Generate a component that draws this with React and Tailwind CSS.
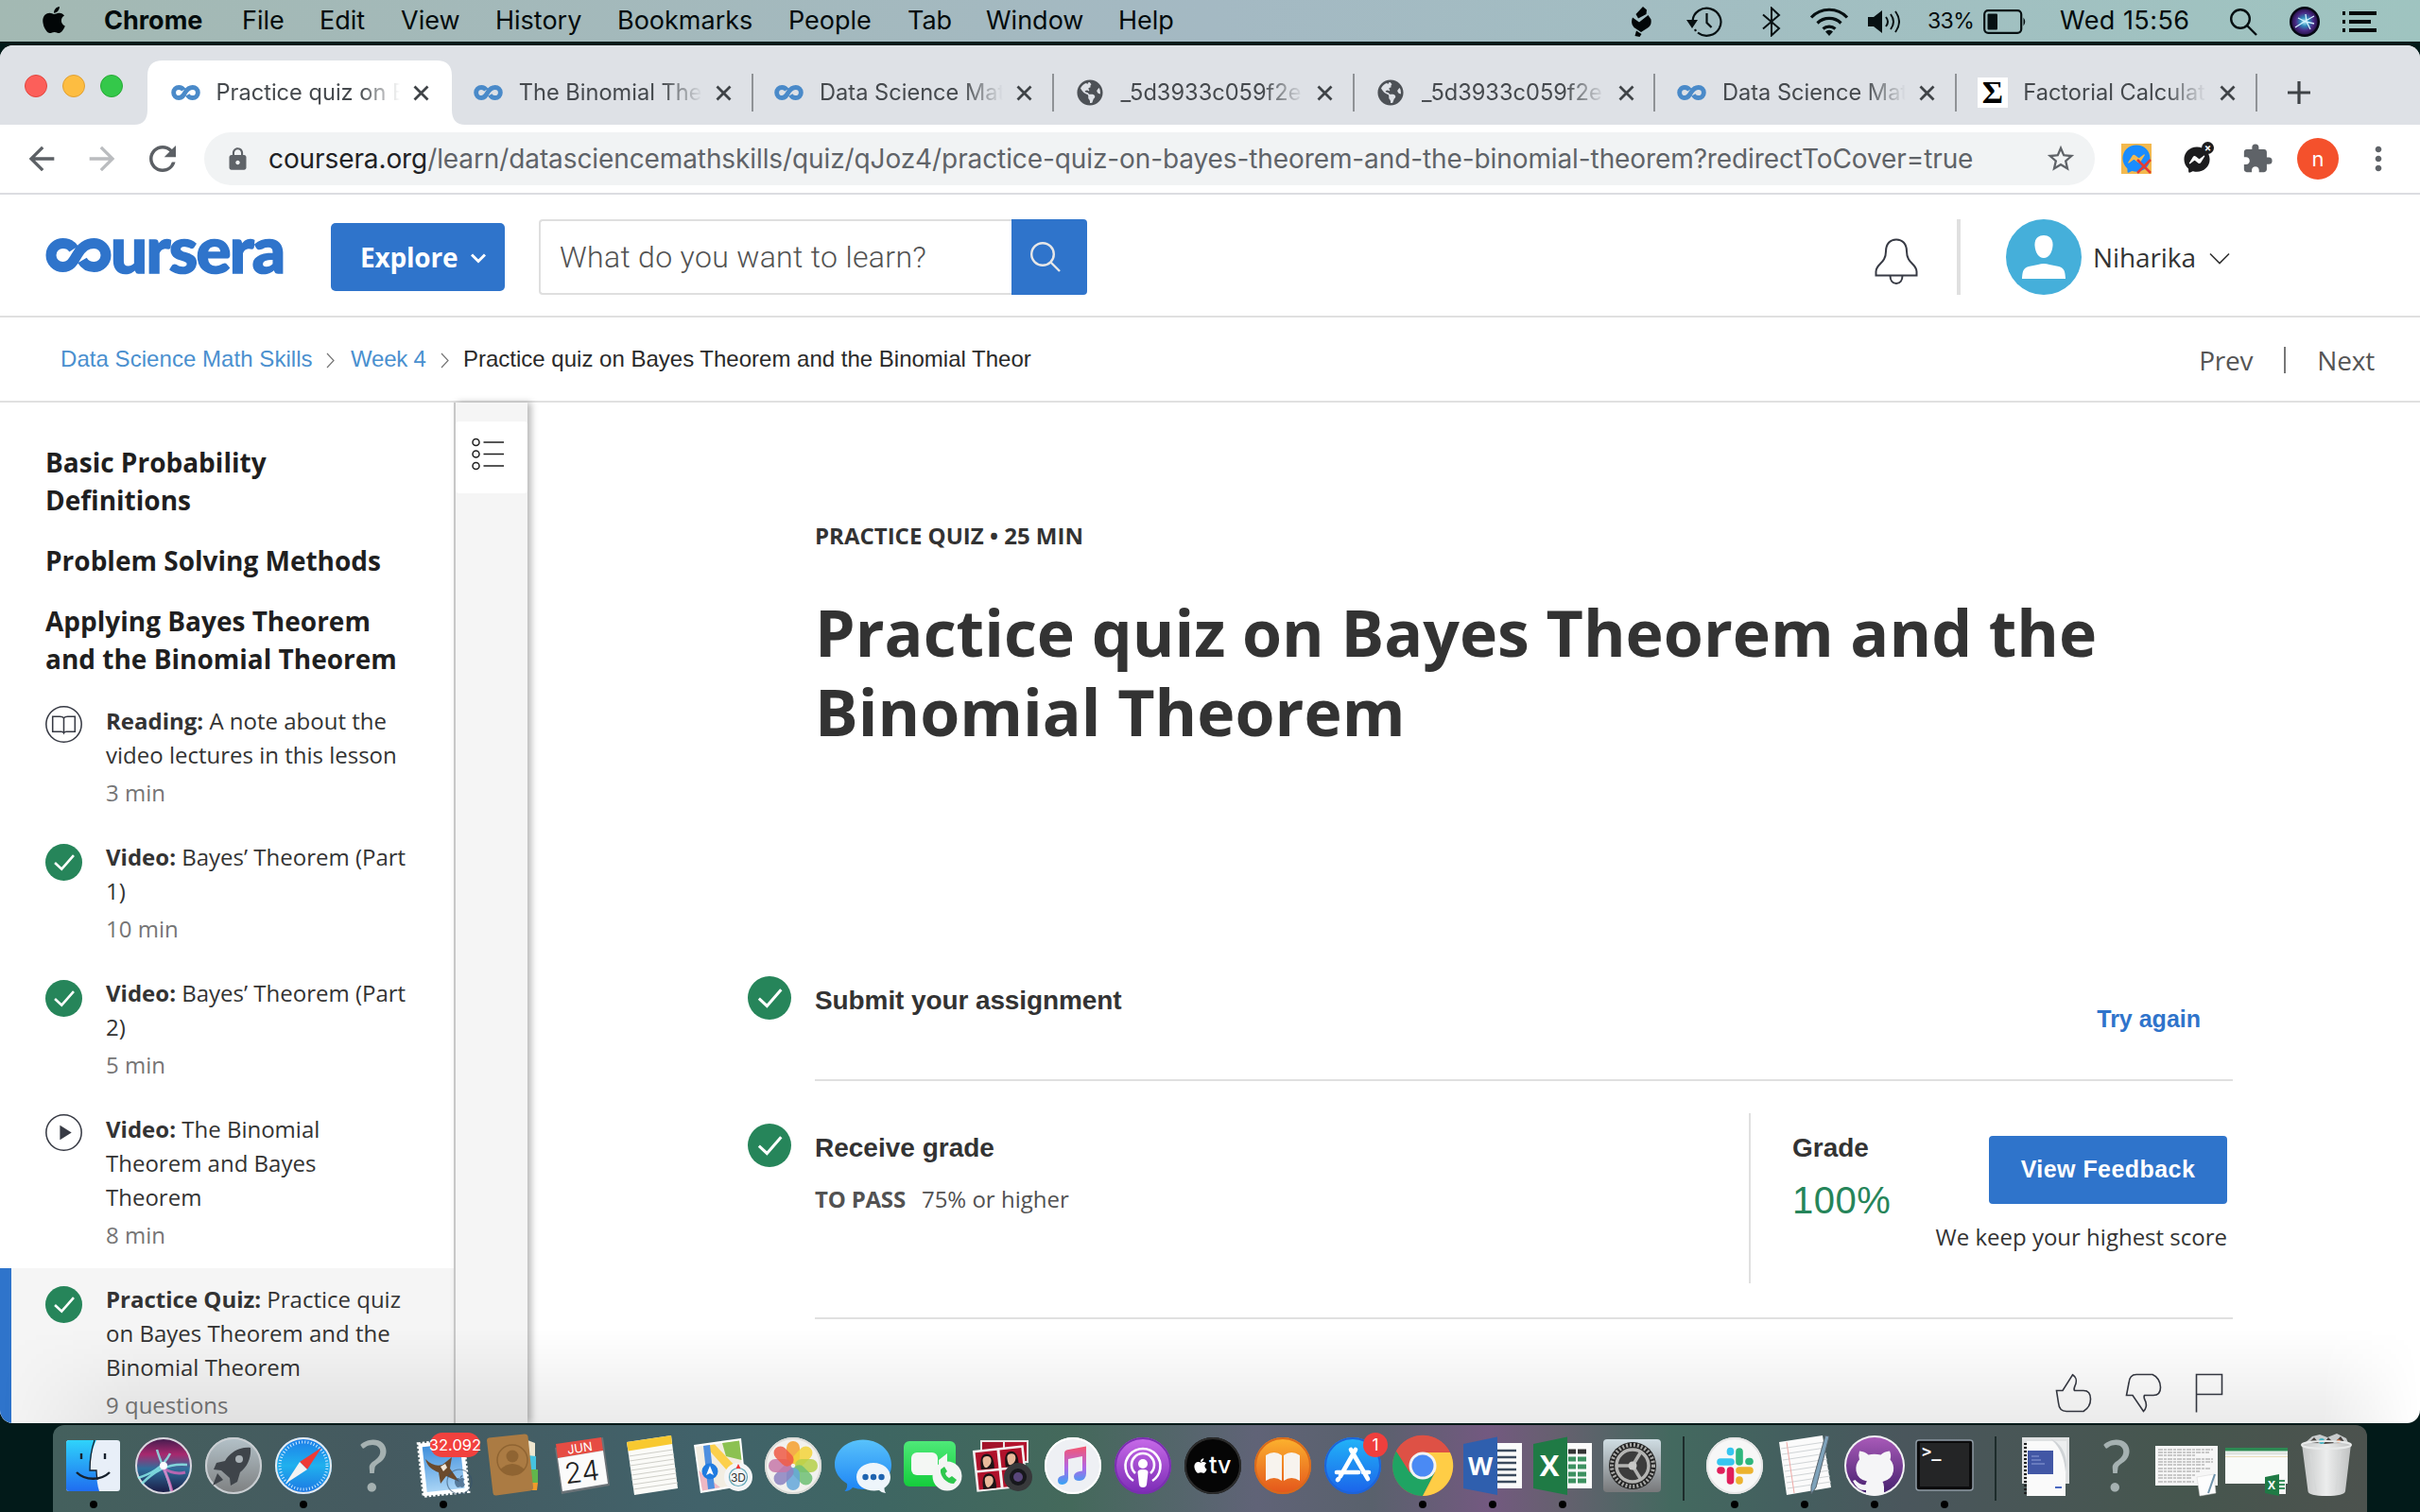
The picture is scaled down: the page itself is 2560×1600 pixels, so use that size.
import React from "react";
import { FaApple, FaFacebookMessenger, FaGlobeAmericas } from "react-icons/fa";
import {
  MdArrowBack,
  MdArrowForward,
  MdRefresh,
  MdLock,
  MdStarBorder,
  MdExtension,
  MdMoreVert,
} from "react-icons/md";

/* ---------- shared marks ---------- */

function Infinity({ className }) {
  return (
    <svg viewBox="0 0 70 36" className={className} fill="none" stroke="currentColor" strokeWidth="11">
      <path d="M30 11.500C27.500 7.500 23.500 5.500 18.500 5.500A12.500 12.500 0 0 0 18.500 30.500C27 30.500 29.500 24.500 34 17C38.500 9.500 43 5.500 51.500 5.500A12.500 12.500 0 0 1 51.500 30.500C46 30.500 42 28.500 39 23.500" />
    </svg>
  );
}

function Check({ className }) {
  return (
    <svg viewBox="0 0 38 38" className={className}>
      <circle cx="19" cy="19" r="19" fill="#26855a" />
      <path d="M9.800 19.500L16.800 26L29.200 11.800" fill="none" stroke="#fff" strokeWidth="2.500" />
    </svg>
  );
}

/* ---------- macOS menu bar ---------- */

const MENUS = [
  ["File", "w-[82px]"],
  ["Edit", "w-[86px]"],
  ["View", "w-[100px]"],
  ["History", "w-[129px]"],
  ["Bookmarks", "w-[181px]"],
  ["People", "w-[126px]"],
  ["Tab", "w-[83px]"],
  ["Window", "w-[140px]"],
  ["Help", "w-[80px]"],
];

function MenuBar() {
  return (
    <div className="flex h-[44px] shrink-0 items-center bg-linear-to-r from-[#a3b9b3] via-[#a4b9c3] to-[#9fc4c0] pl-[41px] pr-[46px] pt-[1px] text-[27px] text-[#030b0c]">
      <FaApple className="mr-[37px] size-[32px] shrink-0 -translate-y-[2px] text-[#020607]" />
      <span className="w-[146px] shrink-0 font-bold">Chrome</span>
      {MENUS.map(([m, w]) => (
        <span key={m} className={"shrink-0 whitespace-nowrap " + w}>
          {m}
        </span>
      ))}
      <div className="ml-auto flex items-center">
        <svg viewBox="0 0 22 32" className="mr-[37px] h-[32px] w-[22px]" fill="#020607">
          <path d="M13 0L17 3.500L16.500 8L8 12.500L5.500 8z" />
          <path d="M2 11.500L9 16.500L18.500 9L21.500 13.500Q22.500 20 18 22.500L11 27L3.500 22Q-.5 18 2 11.500z" />
          <path d="M6 25.500L11.500 29L9.500 32L4.500 31z" />
        </svg>
        <svg viewBox="0 0 38 32" className="mr-[42px] h-[32px] w-[38px]" fill="none" stroke="#071012" strokeWidth="2.200">
          <path d="M6.500 15A15 14.500 0 1 1 12 27.500M10 26l-1-2" />
          <path d="M0 14h12l-6 9z" fill="#071012" stroke="none" />
          <path d="M21.500 7v10l5 5" />
        </svg>
        <svg viewBox="0 0 20 32" className="mr-[30px] h-[32px] w-[20px]" fill="none" stroke="#071012" strokeWidth="2">
          <path d="M1 8.500L18 23L10 30.500V1.500L18 9L1 23.500" />
        </svg>
        <svg viewBox="0 0 42 30" className="mr-[20px] h-[30px] w-[42px]" fill="none" stroke="#071012" strokeWidth="3.200">
          <path d="M2 10.500A26 26 0 0 1 40 10.500M8.500 16.500A18 18 0 0 1 33.500 16.500M14.500 22.500A10 10 0 0 1 27.500 22.500" />
          <path d="M17 25.500a5.500 5.500 0 0 1 8 0L21 30z" fill="#071012" stroke="none" />
        </svg>
        <svg viewBox="0 0 34 26" className="mr-[29px] h-[26px] w-[34px]" fill="none" stroke="#071012" strokeWidth="2">
          <path d="M0 8h6l9-7v24l-9-7H0z" fill="#071012" stroke="none" />
          <path d="M19 8q4 5 0 10M24 5q6 8 0 16M29 2q8 11 0 22" />
        </svg>
        <span className="mr-[10px] w-[49px] text-[23px] tracking-[-0.6px]">33%</span>
        <svg viewBox="0 0 46 26" className="mr-[35px] h-[26px] w-[46px]">
          <rect x="1.200" y="1.200" width="39" height="23.600" rx="4" fill="none" stroke="#071012" strokeWidth="2.200" />
          <rect x="4.500" y="4.500" width="10.500" height="17" rx="1" fill="#071012" />
          <path d="M42.500 8.500q3.500 4.500 0 9z" fill="#071012" />
        </svg>
        <span className="mr-[41px] w-[138px] whitespace-nowrap tracking-[0.45px]">Wed 15:56</span>
        <svg viewBox="0 0 30 30" className="mr-[34px] size-[30px]" fill="none" stroke="#071012" strokeWidth="2.400">
          <circle cx="12" cy="12" r="9.800" />
          <path d="M19 19l10 10" />
        </svg>
        <svg viewBox="0 0 32 32" className="mr-[24px] size-[32px]">
          <defs>
            <radialGradient id="siri-mini">
              <stop offset="0" stopColor="#b8f3f8" />
              <stop offset="0.35" stopColor="#2f86b8" />
              <stop offset="0.7" stopColor="#4a2a86" />
              <stop offset="1" stopColor="#2a1450" />
            </radialGradient>
          </defs>
          <circle cx="16" cy="16" r="16" fill="#060713" />
          <circle cx="16" cy="16" r="13.500" fill="url(#siri-mini)" />
          <path d="M6 22L17 15l9-5M17 8l1 8 4 8M9 12l8 4 9 2" stroke="#d5f3ff" strokeWidth="1.300" fill="none" />
        </svg>
        <svg viewBox="0 0 36 22" className="h-[22px] w-[36px]" fill="#020607">
          <path d="M0 0h3v4H0zM7 0h29v4H7zM0 9h3v4H0zM7 9h23v4H7zM0 18h3v4H0zM7 18h29v4H7z" />
        </svg>
      </div>
    </div>
  );
}

/* ---------- browser chrome ---------- */

const TABS = [
  ["coursera", "Practice quiz on Bayes Theorem", "active"],
  ["coursera", "The Binomial Theorem", "plain"],
  ["coursera", "Data Science Math Skills", "line"],
  ["globe", "_5d3933c059f2e", "line"],
  ["globe", "_5d3933c059f2e", "line"],
  ["coursera", "Data Science Math Skills", "line"],
  ["sigma", "Factorial Calculator", "line"],
];

function Favicon({ kind }) {
  if (kind === "coursera") return <Infinity className="h-[16px] w-[31px] text-[#4a8ac9]" />;
  if (kind === "globe") return <FaGlobeAmericas className="size-[28px] text-[#4d5156]" />;
  return (
    <span className="flex size-[32px] items-center justify-center bg-white font-['Liberation_Serif'] text-[34px] font-bold leading-none text-black">
      Σ
    </span>
  );
}

function Tab({ kind, title, state }) {
  const active = state === "active";
  return (
    <div className={"relative flex h-[68px] w-[318.300px] shrink-0 items-center " + (active ? "pl-[20px]" : "pl-[22px]")}>
      {active && (
        <svg viewBox="0 0 350 68" className="absolute -left-[18px] top-0 h-[68px] w-[350px]">
          <path d="M0 68Q14 68 14 52V16Q14 0 30 0H320Q336 0 336 16V52Q336 68 350 68z" fill="#fff" />
        </svg>
      )}
      <span className="relative flex w-[32px] justify-center">
        <Favicon kind={kind} />
      </span>
      <span className="relative ml-[16.500px] w-[194px] overflow-hidden whitespace-nowrap text-[23.600px] text-[#45494d] [mask-image:linear-gradient(to_right,black_78%,transparent_100%)]">
        {title}
      </span>
      <svg viewBox="0 0 17 17" className="relative ml-[14px] size-[17px]" stroke="#3f4347" strokeWidth="2.800">
        <path d="M1.500 1.500l14 14M15.500 1.500l-14 14" />
      </svg>
      {!active && <span className="ml-auto h-[40px] w-[2px] bg-[#8f9296]" />}
    </div>
  );
}

function TabStrip() {
  return (
    <div className="flex h-[84px] shrink-0 items-start rounded-t-[12px] bg-[#dee1e6] pt-[16px]">
      <div className="flex h-[54px] w-[160px] shrink-0 items-center gap-[16px] pl-[26px]">
        <span className="size-[24px] rounded-full border border-[#e2463f] bg-[#fc5f5a]" />
        <span className="size-[24px] rounded-full border border-[#e0a033] bg-[#fdbd41]" />
        <span className="size-[24px] rounded-full border border-[#27aa35] bg-[#34c84a]" />
      </div>
      {TABS.map(([k, t, s], i) => (
        <Tab key={i} kind={k} title={t} state={s} />
      ))}
      <div className="flex h-[68px] w-[88px] items-center justify-center">
        <svg viewBox="0 0 24 24" className="size-[24px]" stroke="#3f4347" strokeWidth="3.200">
          <path d="M12 0v24M0 12h24" />
        </svg>
      </div>
    </div>
  );
}

function Toolbar() {
  return (
    <div className="flex h-[74px] shrink-0 items-center border-b-2 border-[#dcdde1] bg-white pl-[24px]">
      <MdArrowBack className="size-[40px] text-[#5c6065]" />
      <MdArrowForward className="ml-[24px] size-[40px] text-[#babcbf]" />
      <MdRefresh className="ml-[23px] size-[42px] text-[#5c6065]" />
      <div className="ml-[23px] flex h-[56px] w-[2000px] items-center rounded-full bg-[#f1f3f4] pl-[22px] pr-[19px]">
        <MdLock className="size-[27px] text-[#5f6368]" />
        <span className="ml-[19px] whitespace-nowrap text-[28px] tracking-[-0.100px] text-[#5f6368]">
          <span className="text-[#202124]">coursera.org</span>
          /learn/datasciencemathskills/quiz/qJoz4/practice-quiz-on-bayes-theorem-and-the-binomial-theorem?redirectToCover=true
        </span>
        <MdStarBorder className="ml-auto size-[34px] text-[#5f6368]" />
      </div>
      <div className="relative ml-[28px] flex size-[32px] items-center justify-center bg-[#f3b94e]">
        <FaFacebookMessenger className="size-[30px] text-[#1a8cff]" />
        <svg viewBox="0 0 16 16" className="absolute bottom-0 right-0 size-[16px]" stroke="#e33b32" strokeWidth="2.500">
          <path d="M1 1l14 14M15 1L1 15" />
        </svg>
      </div>
      <div className="relative ml-[34px] flex size-[30px] items-end">
        <FaFacebookMessenger className="size-[28px] text-[#1c1c1e]" />
        <span className="absolute -right-[2px] -top-[3px] flex size-[13px] items-center justify-center rounded-full bg-[#1c1c1e] text-[11px] font-bold leading-none text-white">
          ×
        </span>
      </div>
      <MdExtension className="ml-[31px] size-[34px] text-[#5f6368]" />
      <span className="ml-[25px] flex size-[44px] items-center justify-center rounded-full bg-[#f4512c] text-[22px] text-white">n</span>
      <MdMoreVert className="ml-[22px] size-[40px] text-[#5f6368]" />
    </div>
  );
}

/* ---------- Coursera page ---------- */

function SiteHeader() {
  return (
    <div className="flex h-[130px] shrink-0 items-center border-b-2 border-[#e0e0e0] pl-[48px] pt-[4px] font-['Open_Sans']">
      <div className="flex h-[80px] w-[302px] items-center text-[#2f74cb]">
        <Infinity className="h-[36px] w-[70px] shrink-0 -translate-y-[2px]" />
        <span className="-ml-[1px] -translate-y-[9px] font-['Lato'] text-[69px] font-black leading-[80px] tracking-[-1.700px] [-webkit-text-stroke:1.6px_#2f74cb]">
          ursera
        </span>
      </div>
      <div className="flex h-[72px] w-[184px] items-center rounded-[5px] bg-[#2f74cb] pl-[31px] text-white">
        <span className="text-[28px] font-bold tracking-[-0.200px]">Explore</span>
        <svg viewBox="0 0 16 11" className="ml-[14px] mt-[3px] h-[11px] w-[16px]" fill="none" stroke="#fff" strokeWidth="3">
          <path d="M1 1.500l7 7 7-7" />
        </svg>
      </div>
      <div className="ml-[36px] flex h-[80px] w-[580px]">
        <div className="flex w-[500px] items-center rounded-l-[4px] border-2 border-r-0 border-[#dfdfdf] pl-[20px]">
          <span className="font-['Roboto'] text-[32px] font-light tracking-[0.320px] text-[#525252]">What do you want to learn?</span>
        </div>
        <div className="flex w-[80px] items-center rounded-r-[4px] bg-[#2f74cb] pl-[20px]">
          <svg viewBox="0 0 32 32" className="size-[32px]" fill="none" stroke="#e7e7e7" strokeWidth="2.400">
            <circle cx="13" cy="13" r="11.800" />
            <path d="M21.500 21.500L31 31" />
          </svg>
        </div>
      </div>
      <svg viewBox="0 0 46 50" className="ml-auto mt-[9px] h-[50px] w-[46px]" fill="none" stroke="#373a44" strokeWidth="2">
        <path d="M1.500 39.500v-4C1.500 27 12 27 12 14C12 6 16.500 1.500 23 1.500S34 6 34 14C34 27 44.500 27 44.500 35.500V39.500z" />
        <path d="M16.500 39.500C16.500 44.500 19 48 23 48S29.500 44.500 29.500 39.500" />
      </svg>
      <span className="ml-[41px] h-[80px] w-[4px] bg-[#e0e0e0]" />
      <svg viewBox="0 0 80 80" className="ml-[48px] size-[80px]">
        <circle cx="40" cy="40" r="40" fill="#45afda" />
        <path d="M40 17c7 0 10 5 9.500 11c-.5 7-4 13-9.500 13s-9-6-9.500-13C30 22 33 17 40 17z" fill="#fff" />
        <path d="M17 63C17.500 55 18 52 24 50L34 48Q40 46 46 48L56 50C62 52 62.500 55 63 63z" fill="#fff" />
      </svg>
      <span className="ml-[12px] w-[109px] text-[28px] tracking-[-0.100px] text-[#333]">Niharika</span>
      <svg viewBox="0 0 22 13" className="ml-[14px] mr-[201px] mt-[3px] h-[13px] w-[22px]" fill="none" stroke="#333" strokeWidth="1.600">
        <path d="M1 1.500l10 10 10-10" />
      </svg>
    </div>
  );
}

function Crumb() {
  return (
    <svg viewBox="0 0 9 17" className="mt-[3px] h-[17px] w-[9px]" fill="none" stroke="#757575" strokeWidth="1.200">
      <path d="M1 1l7 7.500-7 7.500" />
    </svg>
  );
}

function Breadcrumbs() {
  return (
    <div className="flex h-[90px] shrink-0 items-center border-b-2 border-[#e0e0e0] pl-[64px] pr-[48px]">
      <div className="flex w-[1027px] items-center overflow-hidden whitespace-nowrap font-['Liberation_Sans'] text-[24px] text-[#4a90cf]">
        <span className="w-[281px] shrink-0 tracking-[0.050px]">Data Science Math Skills</span>
        <Crumb />
        <span className="ml-[17px] w-[95px] shrink-0 tracking-[-0.200px]">Week 4</span>
        <Crumb />
        <span className="ml-[15px] text-[#2a2a2a]">Practice quiz on Bayes Theorem and the Binomial Theor</span>
      </div>
      <div className="ml-auto mt-[2px] flex items-center font-['Open_Sans'] text-[28px] tracking-[-0.200px] text-[#555]">
        <span>Prev</span>
        <span className="mx-[33px] h-[28px] w-[2px] bg-[#777]" />
        <span>Next</span>
      </div>
    </div>
  );
}

const ITEMS = [
  { icon: "book", kind: "Reading:", title: "A note about the video lectures in this lesson", meta: "3 min" },
  { icon: "check", kind: "Video:", title: "Bayes’ Theorem (Part 1)", meta: "10 min" },
  { icon: "check", kind: "Video:", title: "Bayes’ Theorem (Part 2)", meta: "5 min" },
  { icon: "play", kind: "Video:", title: "The Binomial Theorem and Bayes Theorem", meta: "8 min" },
  { icon: "check", kind: "Practice Quiz:", title: "Practice quiz on Bayes Theorem and the Binomial Theorem", meta: "9 questions", active: true },
];

function ItemIcon({ icon }) {
  if (icon === "check") return <Check className="mt-[4px] size-[39px] shrink-0" />;
  return (
    <svg viewBox="0 0 38 38" className="mt-[2px] size-[39px] shrink-0" fill="none" stroke="#373a44" strokeWidth="1.500">
      <circle cx="19" cy="19" r="18.200" />
      {icon === "book" ? (
        <path d="M19 12.500C18 11.300 17 11 15 11H7.500V26.500H16.500C18 26.500 18.500 27 19 28C19.500 27 20 26.500 21.500 26.500H30.500V11H23C21 11 20 11.300 19 12.500zV28" />
      ) : (
        <path d="M15 11.500L27 19L15 26.500z" fill="#373a44" stroke="none" />
      )}
    </svg>
  );
}

function Sidebar() {
  return (
    <div className="flex w-[480px] shrink-0 flex-col overflow-hidden font-['Open_Sans']">
      <div className="flex flex-col gap-[24px] pb-[13px] pl-[48px] pr-[40px] pt-[43px] text-[28px] font-bold leading-[40px] text-[#1f1f1f]">
        <div>Basic Probability<br />Definitions</div>
        <div>Problem Solving Methods</div>
        <div>Applying Bayes Theorem<br />and the Binomial Theorem</div>
      </div>
      {ITEMS.map((it, i) => (
        <div
          key={i}
          className={
            it.active
              ? "flex shrink-0 border-l-[12px] border-[#2f74cb] bg-[#f5f5f5] pb-[17px] pl-[36px] pt-[15px]"
              : "flex shrink-0 pb-[17px] pl-[48px] pt-[15px]"
          }
        >
          <ItemIcon icon={it.icon} />
          <div className="ml-[25px] w-[326px] text-[24px] leading-[36px] text-[#333]">
            <div>
              <b>{it.kind}</b> {it.title}
            </div>
            <div className="mt-[4px] text-[#757575]">{it.meta}</div>
          </div>
        </div>
      ))}
    </div>
  );
}

function Rail() {
  return (
    <div className="w-[78px] shrink-0 border-l-2 border-[#c7c7c7] bg-[#f5f5f5] pt-[20px] shadow-[4px_0_7px_rgba(0,0,0,0.28)]">
      <div className="flex h-[76px] items-start rounded-[4px] bg-white pl-[17px] pt-[17px]">
        <svg viewBox="0 0 34 36" className="h-[36px] w-[34px]" fill="none" stroke="#1f1f1f" strokeWidth="1.500">
          <circle cx="4.500" cy="5" r="3.500" />
          <circle cx="4.500" cy="17.500" r="3.500" />
          <circle cx="4.500" cy="30" r="3.500" />
          <path d="M12.500 5h21.500M12.500 17.500h21.500M12.500 30h21.500" />
        </svg>
      </div>
    </div>
  );
}

function Quiz() {
  return (
    <div className="flex flex-1 flex-col pl-[233px] text-[#333]">
      <div className="pl-[71px] font-['Open_Sans']">
        <div className="mt-[122px] text-[24px] font-bold leading-[37px]">PRACTICE QUIZ • 25 MIN</div>
        <h1 className="mt-[42px] text-[68px] font-bold leading-[84px]">
          Practice quiz on Bayes Theorem and the
          <br />
          Binomial Theorem
        </h1>
      </div>

      <div className="mt-[205px] flex h-[144px]">
        <Check className="mr-[25px] mt-[33px] size-[46px]" />
        <div className="flex w-[1500px] justify-between border-b-2 border-[#e0e0e0] font-['Liberation_Sans'] font-bold">
          <span className="mt-[39px] text-[28px] leading-[40px] tracking-[-0.100px]">Submit your assignment</span>
          <span className="mr-[34px] mt-[58px] text-[25px] leading-[40px] text-[#2f74cb]">Try again</span>
        </div>
      </div>

      <div className="flex h-[252px] shrink-0">
        <Check className="mr-[25px] mt-[45px] size-[46px]" />
        <div className="flex w-[1500px] border-b-2 border-[#e0e0e0]">
          <div className="w-[988px] pt-[51px]">
            <div className="font-['Liberation_Sans'] text-[28px] font-bold leading-[40px]">Receive grade</div>
            <div className="mt-[14px] font-['Open_Sans'] text-[24px] leading-[40px] text-[#525252]">
              <b className="mr-[17px] tracking-[-0.200px]">TO PASS</b>75% or higher
            </div>
          </div>
          <div className="mt-[34px] flex h-[180px] w-[506px] border-l-2 border-[#e0e0e0] pl-[44px]">
            <div className="pt-[17px] font-['Liberation_Sans']">
              <div className="text-[28px] font-bold leading-[40px]">Grade</div>
              <div className="mt-[11px] text-[40px] leading-[48px] tracking-[0.500px] text-[#26855a]">100%</div>
            </div>
            <div className="ml-auto flex flex-col items-end pt-[24px]">
              <div className="flex h-[72px] w-[252px] items-center justify-center rounded-[4px] bg-[#2f74cb] font-['Liberation_Sans'] text-[25px] font-bold tracking-[0.450px] text-white">
                View Feedback
              </div>
              <div className="mt-[15px] font-['Open_Sans'] text-[24px] leading-[40px]">We keep your highest score</div>
            </div>
          </div>
        </div>
      </div>

      <div className="mt-[57px] flex h-[42px] w-[1571px] justify-end gap-[35px] pr-[10px]">
        <svg viewBox="0 0 39 42" className="h-[42px] w-[39px]" fill="none" stroke="#373a44" strokeWidth="1.600">
          <path d="M1.500 18.500H8L18.500 1.800C22 4 23 8 22 11C21 14 19 16.500 20.500 18.500H30C35.500 18.500 37.500 22 37.500 27.500C37.500 33 34 38 30 40.500H12C6.500 40.500 4 37 3.500 31.500z" />
        </svg>
        <svg viewBox="0 0 39 42" className="h-[42px] w-[39px]" fill="none" stroke="#373a44" strokeWidth="1.600">
          <path d="M1.500 23.500L4 10.500C4.500 4.500 7.500 1.500 12 1.500H29C34 3.500 37.500 9 37.500 15C37.500 21 35 23.500 30 23.500H20.500C19 26 21 28 22 31C23 35 22 38 19.500 40.500L8 23.500z" />
        </svg>
        <svg viewBox="0 0 30 42" className="h-[42px] w-[30px]" fill="none" stroke="#373a44" strokeWidth="1.600">
          <path d="M1.500 41.500V1.500H28.500V22.500H1.500" />
        </svg>
      </div>
    </div>
  );
}

/* ---------- dock ---------- */

function Disc({ fill, ring = "#ffffff55" }) {
  return (
    <>
      <circle cx="37" cy="43" r="30" fill={fill} />
      <circle cx="37" cy="43" r="29" fill="none" stroke={ring} strokeWidth="2" />
    </>
  );
}

const PETALS = ["#f6a02d", "#f3d33a", "#b5d049", "#6fbf73", "#64a7d9", "#8c82c0", "#c778a8", "#ee5a45"];

const ART = {
  finder: (
    <>
      <rect x="8" y="16" width="57" height="54" rx="3" fill="#e8eff8" />
      <path d="M11 16H40C35 26 33.500 36 33.500 48H40C40 56 41 64 43 70H11a3 3 0 0 1-3-3V19a3 3 0 0 1 3-3z" fill="url(#g-finder)" />
      <path d="M24 30v6M49 30v6M19 50c9 9 26 9 35 0" stroke="#16202c" strokeWidth="2.400" fill="none" />
      <path d="M38 16C34.500 26 33 36 33 48H40C40 52 40.500 55 41 58" stroke="#16202c" strokeWidth="1.300" fill="none" />
    </>
  ),
  siri: (
    <>
      <Disc fill="url(#g-siri)" ring="#d8d8de" />
      <path d="M10 56C22 52 36 46 44 30M30 26C34 40 42 54 45 70M14 62C26 50 40 40 62 42" stroke="#8ff3ee" strokeWidth="2.500" fill="none" opacity="0.800" />
      <path d="M34 44C46 52 54 52 60 50M36 44C42 56 44 62 46 70" stroke="#f06ac0" strokeWidth="3" fill="none" opacity="0.700" />
      <circle cx="37" cy="43" r="4" fill="#fff" />
    </>
  ),
  launchpad: (
    <>
      <Disc fill="url(#g-launch)" ring="#c9ced2" />
      <path d="M55 24C44 23 34 28 28 38L19 40L16 47L24 48L33 56L34 64L41 60L44 50C52 44 56 34 55 24z" fill="#3f444a" />
      <circle cx="43" cy="36" r="4" fill="#aab1b6" />
      <path d="M20 51l-5 13 11-6z" fill="#3f444a" />
    </>
  ),
  safari: (
    <>
      <Disc fill="url(#g-safari)" ring="#e6eaee" />
      <circle cx="37" cy="43" r="25" fill="none" stroke="#cfeaff" strokeWidth="3" strokeDasharray="1 2.200" />
      <path d="M56 24L41 47L33 39z" fill="#ee3b36" />
      <path d="M18 62L33 39L41 47z" fill="#f3f3f3" />
    </>
  ),
  mail: (
    <>
      <g transform="rotate(-6 37 44)">
        <rect x="13" y="17" width="48" height="56" fill="#fff" />
        <rect x="13" y="17" width="48" height="56" fill="none" stroke="#fff" strokeWidth="3" strokeDasharray="2.500 2" />
        <rect x="17" y="21" width="40" height="48" fill="url(#g-mail)" />
      </g>
      <path d="M18 36C24 42 30 44 36 42L46 34L44 46L54 60L40 54L34 62L32 50C26 48 20 44 18 36z" fill="#6b4a2c" />
      <path d="M34 44l5-3 2 4-4 4z" fill="#f4e9d8" />
      <circle cx="54" cy="60" r="13" fill="none" stroke="#33506c" strokeWidth="1.200" opacity="0.600" />
      <FaApple x="47" y="52" size={15} color="#3a5876" opacity="0.700" />
      <rect x="23" y="8" width="53" height="26" rx="13" fill="#f2413e" />
      <text x="49.500" y="26.500" textAnchor="middle" fontSize="16.500" fill="#fff" fontFamily="Inter">32.092</text>
    </>
  ),
  contacts: (
    <>
      <path d="M52 16l8 3v14h-8z" fill="#efe6cf" />
      <path d="M52 32l9 1v14h-9z" fill="#46c3e0" />
      <path d="M54 47h9v14h-9z" fill="#61b64c" />
      <path d="M54 61h9l-1 8h-8z" fill="#f09a2b" />
      <path d="M9 16Q9 14 11 13.500L49 9.500Q52 9.500 52.500 12L58 66Q58 69 55 69.500L19 74.500Q16 75 15.500 72z" fill="#ab7b43" />
      <circle cx="36" cy="37" r="16" fill="none" stroke="#8f6432" strokeWidth="1.500" />
      <circle cx="36" cy="33" r="6.500" fill="#8f6432" />
      <path d="M23 47q13-12 26 0q-13 12-26 0z" fill="#8f6432" />
    </>
  ),
  calendar: (
    <>
      <path d="M7 24L58 13L65 64L14 73z" fill="#6b7378" />
      <path d="M8 20L56 13L58 27L10 35z" fill="#e64c43" />
      <path d="M10 35L58 27L63 62L15 70z" fill="#fbfbfb" />
      <text x="34" y="29" textAnchor="middle" fontSize="13" fill="#fff" fontFamily="Inter" transform="rotate(-8 33 29)">JUN</text>
      <text x="37" y="60" textAnchor="middle" fontSize="30" fill="#222" fontFamily="Inter" fontWeight="300" transform="rotate(-7 37 61)">24</text>
    </>
  ),
  notes: (
    <>
      <path d="M9 18L56 11L63 67L17 74z" fill="#fbfbf8" />
      <path d="M9 18L56 11L57 20L10.500 27.500z" fill="#f8c930" />
      <path d="M11 33l47-7M12 38l47-7M12.500 43l47-7M13 48l47-7M14 53l47-7M14.500 58l47-7M15 63l47-7M16 68l47-7" stroke="#cfcfc9" strokeWidth="1" />
    </>
  ),
  maps: (
    <>
      <path d="M6 21L56 14L61 64L13 72z" fill="#fff" />
      <path d="M8 23L54 16.500L59 62L15 69.500z" fill="#f2ede2" />
      <path d="M36 19L54 16.500L56.500 37L40 33z" fill="#8cc152" />
      <path d="M18 22L28 20.500L56 50L57 60L50 58z" fill="#fcd04b" />
      <path d="M11 48L34 66L15 69.500z" fill="#efb8c4" />
      <path d="M16 22l7-1 5 46-7 1z" fill="#4e8fe0" />
      <circle cx="23" cy="49" r="8.500" fill="#1f7be0" />
      <path d="M23 43l4 10-4-2-4 2z" fill="#fff" />
      <circle cx="53" cy="55" r="15" fill="#f4f5f6" />
      <circle cx="53" cy="55" r="9.500" fill="none" stroke="#5fa6b8" strokeWidth="1.200" />
      <text x="53" y="59.500" textAnchor="middle" fontSize="12" fill="#333" fontFamily="Inter">3D</text>
      <path d="M50.500 46l2.500-5 2.500 5z" fill="#e33" />
    </>
  ),
  photos: (
    <>
      <Disc fill="#f2f1ee" ring="#dcdcd8" />
      {PETALS.map((c, i) => (
        <rect key={c} x="30" y="17" width="14" height="24" rx="7" fill={c} opacity="0.850" transform={"rotate(" + i * 45 + " 37 43)"} />
      ))}
    </>
  ),
  messages: (
    <>
      <path d="M37 15.500C54 15.500 67 27 67 42S54 68 37 68C33 68 29.500 67.300 26 66C24 68.500 21 70 17.500 70C20 67.500 20.500 65 20 62C12 57 7 50 7 42C7 27 20 15.500 37 15.500z" fill="url(#g-msg)" />
      <path d="M48 40C58 40 66 46.500 66 55C66 60 63.500 64 59.500 66.500C59.500 69 60 70.500 61 72C57.500 71.500 55.500 70.500 54 69C42 71 30 66 30 55C30 46.500 38 40 48 40z" fill="#eef5fb" />
      <circle cx="39.500" cy="55" r="3.200" fill="#1f64b0" />
      <circle cx="48" cy="55" r="3.200" fill="#1f64b0" />
      <circle cx="56.500" cy="55" r="3.200" fill="#1f64b0" />
    </>
  ),
  facetime: (
    <>
      <rect x="6" y="17" width="55" height="48" rx="6" fill="url(#g-face)" />
      <rect x="14" y="29" width="28" height="24" rx="6" fill="#f4f7f4" />
      <path d="M43 37l9-7v22l-9-7z" fill="#f4f7f4" />
      <circle cx="52" cy="54" r="15.500" fill="#f4f5f4" />
      <path d="M45 47c-1 7 6 15 14 15l3-4-5-4-3 2c-2-1-3.500-3-4-5l2-2-3-5z" fill="#2fc84e" />
    </>
  ),
  booth: (
    <>
      <rect x="13" y="16" width="51" height="24" fill="#e9e4e4" />
      <rect x="15" y="18" width="22" height="20" fill="#a3132a" />
      <rect x="39" y="18" width="23" height="20" fill="#b3142e" />
      <g transform="rotate(-6 34 46)">
        <rect x="7" y="24" width="54" height="44" fill="#f4f2f2" />
        <rect x="9.500" y="26.500" width="23" height="19" fill="#b0122b" />
        <rect x="35.500" y="26.500" width="23" height="19" fill="#b0122b" />
        <rect x="9.500" y="48" width="23" height="18" fill="#b0122b" />
        <rect x="35.500" y="48" width="23" height="18" fill="#b0122b" />
        <path d="M14 45q-1-16 7-16t7 16zM40 45q-1-16 7-16t7 16zM14 66q-1-16 7-16t7 16z" fill="#1e1416" />
        <path d="M16.500 36q0-4.500 4.500-4.500t4.500 4.500-4.500 7-4.500-7zM42.500 36q0-4.500 4.500-4.500t4.500 4.500-4.500 7-4.500-7zM16.500 57q0-4.500 4.500-4.500t4.500 4.500-4.500 7-4.500-7z" fill="#eab99b" />
      </g>
      <circle cx="53" cy="55" r="15" fill="#38393b" />
      <circle cx="53" cy="55" r="9" fill="#17181c" />
      <circle cx="53" cy="55" r="5" fill="#58467a" />
    </>
  ),
  music: (
    <>
      <Disc fill="#eef0f4" ring="#ffffff" />
      <path d="M28 30Q28 27 31 26.300L51 22.500V51Q51 58 44 59Q38 59 38 54.500Q38 50 44 49L47 48.500V33L32 36V56Q32 62 26 63Q21 63 21 58.500Q21 54.500 26 53.500L28 53z" fill="url(#g-music)" />
    </>
  ),
  podcasts: (
    <>
      <Disc fill="url(#g-pod)" ring="#7a2fb0" />
      <g fill="none" stroke="#fff" strokeWidth="2.600">
        <path d="M27 59A18.500 18.500 0 1 1 47 59" />
        <path d="M29 51A12 12 0 1 1 45 51" />
      </g>
      <circle cx="37" cy="41" r="5" fill="#fff" />
      <path d="M31.500 50q0-3 5.500-3t5.500 3l-1.500 13q-.5 3-4 3t-4-3z" fill="#fff" />
    </>
  ),
  tv: (
    <>
      <Disc fill="#050505" ring="#2c2c2c" />
      <FaApple x="15" y="34" size={18} color="#fff" />
      <text x="33" y="51" fontSize="25" fill="#fff" fontFamily="Inter" fontWeight="500">tv</text>
    </>
  ),
  books: (
    <>
      <Disc fill="url(#g-books)" ring="#d8691c" />
      <path d="M19 32q9-6 17 0v27q-8-6-17 0zM55 32q-9-6-17 0v27q8-6 17 0z" fill="#f7f3ee" />
    </>
  ),
  store: (
    <>
      <Disc fill="url(#g-store)" ring="#1d63d8" />
      <g stroke="#fff" strokeWidth="4.600" strokeLinecap="round">
        <path d="M40 26L24 54M35 26L53 57M20 50H43M48 50H54M22 57l-1 1" />
      </g>
      <circle cx="61" cy="21" r="13" fill="#ef3f3d" />
      <text x="61" y="27" textAnchor="middle" fontSize="17" fill="#fff" fontFamily="Inter">1</text>
    </>
  ),
  chrome: (
    <>
      <circle cx="37" cy="43" r="32" fill="#de5145" />
      <path d="M9 27.500A32 32 0 0 0 37 75L50 50L37 43L23 50z" fill="#1fa463" />
      <path d="M37 75A32 32 0 0 0 66 29H37L50 50z" fill="#ffcd46" />
      <path d="M9 27.500A32 32 0 0 1 66 29H37L25 50z" fill="#de5145" />
      <circle cx="37" cy="43" r="14.500" fill="#f3f3f3" />
      <circle cx="37" cy="43" r="11.500" fill="#4a8af4" />
    </>
  ),
  word: (
    <>
      <rect x="38" y="19" width="30" height="48" fill="#fbfbfb" />
      <path d="M42 27h20M42 34h20M42 40h20M42 47h20M42 53h20M42 60h20" stroke="#3c4b5e" strokeWidth="2.400" />
      <path d="M6 20L42 12.500V74L6 67z" fill="#2f5fae" />
      <text x="24" y="53" textAnchor="middle" fontSize="27" fill="#fff" fontFamily="Open Sans" fontWeight="700">W</text>
    </>
  ),
  excel: (
    <>
      <rect x="38" y="19" width="30" height="48" fill="#fbfbfb" />
      <path d="M43 28h19" stroke="#333" strokeWidth="5" />
      <path d="M43 36h19M43 44h19M43 52h19M43 59h19" stroke="#3d9160" strokeWidth="5" />
      <path d="M52 24v40" stroke="#fbfbfb" strokeWidth="2" />
      <path d="M6 20L42 12.500V74L6 67z" fill="#1f7a45" />
      <text x="23" y="54" textAnchor="middle" fontSize="31" fill="#fff" fontFamily="Open Sans" fontWeight="700">X</text>
    </>
  ),
  settings: (
    <>
      <rect x="6" y="15" width="61" height="56" rx="4" fill="url(#g-set)" />
      <circle cx="37" cy="43" r="25" fill="#232323" />
      <circle cx="37" cy="43" r="22" fill="none" stroke="#a9a9a7" strokeWidth="4" strokeDasharray="2 2" />
      <circle cx="37" cy="43" r="17" fill="#3c3c3c" stroke="#b4b4b2" strokeWidth="3.500" />
      <path d="M37 43H20M37 43L46 28M37 43L46 58" stroke="#b4b4b2" strokeWidth="3.500" />
      <circle cx="37" cy="43" r="4.500" fill="#c9c9c7" />
    </>
  ),
  slack: (
    <>
      <Disc fill="#f7f7f7" ring="#e6e6e6" />
      <g strokeWidth="7.600" strokeLinecap="round">
        <path d="M22 39h11" stroke="#36c5f0" />
        <path d="M32.500 27.500v1" stroke="#36c5f0" />
        <path d="M42 28v11" stroke="#2eb67d" />
        <path d="M52 38.500h1" stroke="#2eb67d" />
        <path d="M42 48h11" stroke="#ecb22e" />
        <path d="M42 58v1" stroke="#ecb22e" />
        <path d="M32.500 48v11" stroke="#e01e5a" />
        <path d="M22 48h1" stroke="#e01e5a" />
      </g>
    </>
  ),
  textedit: (
    <>
      <path d="M10 18L56 11L65 66L18 74z" fill="#fbfbfb" />
      <path d="M12 25l46-7M13 31l46-7M14 37l46-7M15 43l46-7M16 49l46-7M17 55l46-7M18 61l46-7M19 67l46-7" stroke="#d0d4d6" />
      <path d="M18 18l8 54" stroke="#f0a9a6" />
      <path d="M59 11l4 1-14 54-5 7 0-8z" fill="#7fa3bb" stroke="#56626b" />
    </>
  ),
  github: (
    <>
      <circle cx="37" cy="43" r="32" fill="#f2f2f4" />
      <circle cx="37" cy="43" r="30" fill="url(#g-git)" />
      <path d="M21 27.500q6 .5 9.500 4q6-1.500 13 0q3.500-3.500 9.500-4q2 5 .5 9q4.500 5 3.500 12q-1.500 9-11.500 11.500q1.500 2 1.500 5.500v7.500q-10 3-19 .500V69q-9 1-14-10l2.500-1q5 6 11 5q0-2 1.500-3.500q-10-2-11.500-11q-1-7 3.500-12q-1.500-4 0-9z" fill="#f5f5f7" />
    </>
  ),
  terminal: (
    <>
      <rect x="7" y="16" width="60" height="53" rx="3" fill="#0b0b0c" stroke="#8e9aa4" strokeWidth="1.500" />
      <rect x="11" y="19" width="52" height="46" fill="#242526" />
      <text x="13" y="34" fontSize="17" fill="#fff" fontFamily="DejaVu Sans Mono" fontWeight="700">&gt;_</text>
    </>
  ),
  pdf: (
    <>
      <rect x="11" y="13" width="50" height="49" fill="#dfe1e2" />
      <rect x="16" y="17" width="41" height="58" fill="#fafafa" />
      <rect x="17" y="27" width="27" height="25" fill="#4257a5" />
      <path d="M14.500 19v56" stroke="#222" strokeWidth="3" strokeDasharray="2 2" />
      <path d="M43 17H58V52C56 36 52 24 43 17z" fill="#eceeef" />
      <path d="M40 14C50 20 56 34 57 50C60 38 56 20 40 14z" fill="#cfd3d6" />
      <path d="M21 33h8M21 37h10M21 41h14" stroke="#8fa0d8" />
      <path d="M46 66h7" stroke="#4a68c0" strokeWidth="2" />
    </>
  ),
  missing: (
    <text x="37" y="70" textAnchor="middle" fontSize="75" fill="#a5b1b1" fontFamily="Lato" fontWeight="400">?</text>
  ),
  docwin: (
    <>
      <rect x="4" y="22" width="66" height="42" fill="#f6f6f6" />
      <path d="M7 26h58M7 29h54M7 32h40M7 36h58M7 39h58M7 42h50M7 46h56M7 49h44M7 53h40M7 56h36M7 60h38" stroke="#9b9b9b" strokeWidth="1" strokeDasharray="5 1 3 1" />
      <path d="M48 55l18-3 2 20-17 3z" fill="#fdfdfd" stroke="#d0d0d0" strokeWidth="0.500" />
      <path d="M67 52l-7 20" stroke="#6f93ab" strokeWidth="2" />
    </>
  ),
  sheetwin: (
    <>
      <rect x="4" y="24" width="66" height="38" fill="#f9faf9" />
      <rect x="4" y="24" width="66" height="3.500" fill="#2d8a53" />
      <path d="M4 30h66" stroke="#dfe3df" strokeWidth="3" />
      <path d="M4 33.500h66" stroke="#e9dcb8" strokeWidth="1" />
      <rect x="56" y="56" width="12" height="17" fill="#f5f5f5" />
      <path d="M61 59h6M61 63h6M61 67h6" stroke="#3d9160" strokeWidth="2" />
      <path d="M46 55l15-3v23l-15-3z" fill="#1f7a45" />
      <text x="53" y="68" textAnchor="middle" fontSize="12" fill="#fff" fontFamily="Open Sans" fontWeight="700">X</text>
    </>
  ),
  trash: (
    <>
      <path d="M13 20L22 12L30 10L38 13L48 9L58 14L61 21z" fill="#c9cccd" />
      <path d="M18 19l6-6 5 6zM34 20l5-7 6 6zM46 18l6-6 5 7z" fill="#46423f" />
      <circle cx="32" cy="17" r="3" fill="#3fb2c0" />
      <circle cx="50" cy="17" r="2" fill="#d06a3a" />
      <path d="M11 20H63L57 70Q56 75 37 75T17.500 70z" fill="url(#g-trash)" />
      <ellipse cx="37" cy="21" rx="26" ry="4" fill="none" stroke="#e8eaea" strokeWidth="2" />
      <path d="M20 30l6 40M52 28l-5 42" stroke="#d6d8d8" strokeWidth="1.500" fill="none" />
    </>
  ),
};

function Defs() {
  return (
    <svg className="absolute size-0">
      <defs>
        <linearGradient id="g-finder" x2="0" y2="1"><stop stopColor="#2fd3fb" /><stop offset="1" stopColor="#1f6df0" /></linearGradient>
        <linearGradient id="g-siri" x2="0" y2="1"><stop stopColor="#3b1c4c" /><stop offset="0.300" stopColor="#a8286e" /><stop offset="0.550" stopColor="#2f6f9c" /><stop offset="1" stopColor="#1a1640" /></linearGradient>
        <linearGradient id="g-launch" x2="0" y2="1"><stop stopColor="#b4c2c9" /><stop offset="1" stopColor="#7d7f80" /></linearGradient>
        <linearGradient id="g-safari" x2="0" y2="1"><stop stopColor="#1d7be8" /><stop offset="0.500" stopColor="#20b1ee" /><stop offset="1" stopColor="#1d74e2" /></linearGradient>
        <linearGradient id="g-mail" x2="0" y2="1"><stop stopColor="#3f8fdc" /><stop offset="1" stopColor="#a9d4f5" /></linearGradient>
        <linearGradient id="g-msg" x2="0" y2="1"><stop stopColor="#58c2fb" /><stop offset="1" stopColor="#1d84f5" /></linearGradient>
        <linearGradient id="g-face" x2="0" y2="1"><stop stopColor="#4ee978" /><stop offset="1" stopColor="#15cd3c" /></linearGradient>
        <linearGradient id="g-music" x2="0" y2="1"><stop stopColor="#f5566f" /><stop offset="0.550" stopColor="#b267e6" /><stop offset="1" stopColor="#35a4f5" /></linearGradient>
        <linearGradient id="g-pod" x2="0" y2="1"><stop stopColor="#c86be9" /><stop offset="1" stopColor="#7b2bb5" /></linearGradient>
        <linearGradient id="g-books" x2="0" y2="1"><stop stopColor="#fcb32e" /><stop offset="1" stopColor="#e4541b" /></linearGradient>
        <linearGradient id="g-store" x2="0" y2="1"><stop stopColor="#22b5f8" /><stop offset="1" stopColor="#1b62ea" /></linearGradient>
        <linearGradient id="g-set" x2="0" y2="1"><stop stopColor="#cfdde3" /><stop offset="1" stopColor="#77787a" /></linearGradient>
        <linearGradient id="g-git" x2="0" y2="1"><stop stopColor="#a85ab8" /><stop offset="1" stopColor="#45206e" /></linearGradient>
        <linearGradient id="g-trash"><stop stopColor="#c4c6c6" /><stop offset="0.500" stopColor="#eceded" /><stop offset="1" stopColor="#bfc1c1" /></linearGradient>
      </defs>
    </svg>
  );
}

const DOCK = [
  ["finder", 1], ["siri"], ["launchpad"], ["safari", 1], ["missing"], ["mail", 1], ["contacts"], ["calendar"], ["notes"], ["maps"],
  ["photos"], ["messages"], ["facetime"], ["booth"], ["music"], ["podcasts"], ["tv"], ["books"], ["store"], ["chrome", 1],
  ["word", 1], ["excel", 1], ["settings"], ["|"],
  ["slack", 1], ["textedit", 1], ["github", 1], ["terminal", 1], ["|"],
  ["pdf"], ["missing"], ["docwin"], ["sheetwin"], ["trash"],
];

function Dock() {
  return (
    <div className="ml-[56px] mt-[2px] flex h-[92px] w-[2448px] rounded-t-[12px] bg-[linear-gradient(90deg,#44605d_0%,#455a60_14%,#41626a_28%,#3e6662_36%,#44695b_44%,#606377_52%,#59616c_57%,#735980_62%,#66606f_65%,#43695f_70%,#445f5f_75%,#4a565c_80%,#46564e_92%,#4c524e_100%)] pl-[6px]">
      <Defs />
      {DOCK.map(([name, dot], i) =>
        name === "|" ? (
          <span key={i} className="mx-[16px] mt-[12px] h-[68px] w-[2px] shrink-0 bg-[#1d2c2b]" />
        ) : (
          <svg key={i} viewBox="0 0 74 92" className="h-[92px] w-[74px] shrink-0 overflow-visible">
            {ART[name]}
            {dot && <circle cx="37" cy="84" r="4" fill="#000" />}
          </svg>
        )
      )}
    </div>
  );
}

export default function App() {
  return (
    <div className="flex h-[1600px] w-[2560px] flex-col overflow-hidden bg-[#021a19] font-['Inter',sans-serif] leading-normal">
      <MenuBar />
      <div className="relative mt-[4px] flex h-[1458px] shrink-0 flex-col overflow-hidden rounded-[14px] bg-white">
        <TabStrip />
        <Toolbar />
        <SiteHeader />
        <Breadcrumbs />
        <div className="flex min-h-0 flex-1">
          <Sidebar />
          <Rail />
          <Quiz />
        </div>
        <div className="pointer-events-none absolute inset-x-0 bottom-0 h-[100px] bg-linear-to-t from-black/8 to-transparent [mask-image:linear-gradient(to_right,transparent,black_6%,black_96%,transparent)]" />
      </div>
      <Dock />
    </div>
  );
}
